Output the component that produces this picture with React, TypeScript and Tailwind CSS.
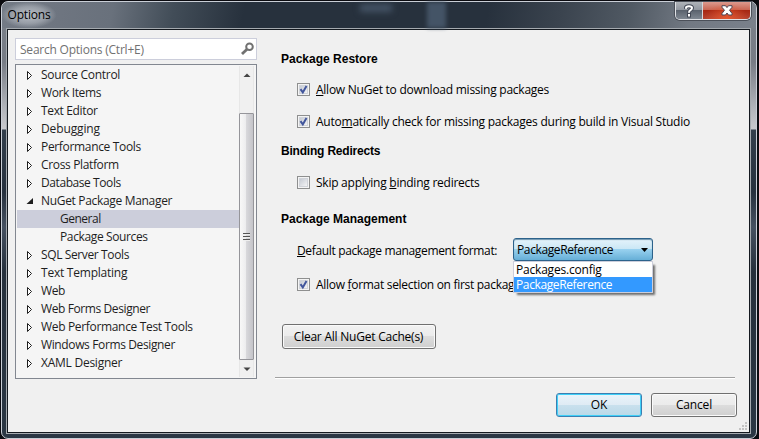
import type { ReactNode } from "react";

type Item = { label: string; tracking: string; open?: boolean; child?: boolean; selected?: boolean };

const items: Item[] = [
  { label: "Source Control", tracking: "tracking-[-0.3px]" },
  { label: "Work Items", tracking: "tracking-[-0.38px]" },
  { label: "Text Editor", tracking: "tracking-[-0.35px]" },
  { label: "Debugging", tracking: "tracking-[-0.12px]" },
  { label: "Performance Tools", tracking: "tracking-[-0.33px]" },
  { label: "Cross Platform", tracking: "tracking-[-0.35px]" },
  { label: "Database Tools", tracking: "tracking-[-0.42px]" },
  { label: "NuGet Package Manager", tracking: "tracking-[-0.32px]", open: true },
  { label: "General", tracking: "tracking-[-0.5px]", child: true, selected: true },
  { label: "Package Sources", tracking: "tracking-[-0.37px]", child: true },
  { label: "SQL Server Tools", tracking: "tracking-[-0.38px]" },
  { label: "Text Templating", tracking: "tracking-[-0.23px]" },
  { label: "Web", tracking: "tracking-[-0.4px]" },
  { label: "Web Forms Designer", tracking: "tracking-[-0.4px]" },
  { label: "Web Performance Test Tools", tracking: "tracking-[-0.33px]" },
  { label: "Windows Forms Designer", tracking: "tracking-[-0.37px]" },
  { label: "XAML Designer", tracking: "tracking-[-0.25px]" },
];

function TreeRow({ item }: { item: Item }) {
  return (
    <div
      className={`flex h-[18px] w-[222px] items-center whitespace-nowrap leading-[18px] ${item.selected ? "bg-[#cccedb]" : ""} ${item.child ? "pl-[43px]" : "pl-[9px]"}`}
    >
      {!item.child && (
        <svg width="15" height="18" viewBox="0 0 15 18" className="shrink-0">
          {item.open ? (
            <path d="M7 6v6H0.5z" fill="#1e1e1e" />
          ) : (
            <path d="M1.500 5.500v8l4-4z" fill="#fff" stroke="#1e1e1e" />
          )}
        </svg>
      )}
      <span className={item.tracking}>{item.label}</span>
    </div>
  );
}

function CheckRow({ checked, className, children }: { checked?: boolean; className: string; children: ReactNode }) {
  return (
    <div className={`ml-[22px] flex h-[13px] items-center whitespace-nowrap ${className}`}>
      <svg width="13" height="13" viewBox="0 0 13 13" className="mr-[6px] shrink-0">
        <defs>
          <linearGradient id="box" x1="0" y1="0" x2="1" y2="1">
            <stop offset="0" stopColor="#c3c8d1" />
            <stop offset="1" stopColor="#f6f6f7" />
          </linearGradient>
        </defs>
        <rect x="0.5" y="0.5" width="12" height="12" fill="#f4f4f4" stroke="#8e8f8f" />
        <rect x="2.5" y="2.5" width="8" height="8" fill="url(#box)" stroke="#d0d3d9" />
        {checked && <path d="M3.500 6.200l2.300 3.200L9.500 2.900" fill="none" stroke="#42569c" strokeWidth="2" />}
      </svg>
      {children}
    </div>
  );
}

function Key({ children }: { children: ReactNode }) {
  return <span className="underline decoration-1 underline-offset-[1px] [text-decoration-skip-ink:none]">{children}</span>;
}

function Heading({ className, children }: { className: string; children: ReactNode }) {
  return (
    <h2
      className={`ml-[6px] h-[14px] whitespace-nowrap font-['Liberation_Sans',Arial,sans-serif] text-[12px] font-bold leading-[14px] ${className}`}
    >
      {children}
    </h2>
  );
}

export default function App() {
  return (
    <div className="h-[439px] w-[759px] overflow-hidden bg-[#0b0b10] pl-px pt-px font-['Open_Sans','Noto_Sans',sans-serif] text-[12px] text-black">
      <div className="flex h-[438px] w-[756px] flex-col rounded-[7px] border border-[#c9ced6] bg-[linear-gradient(180deg,#7a808a_0px,#777c85_60px,#b0b3b9_105px,#c8c9cd_127px,#333f4c_128px,#27313e_190px,#465161_225px,#26303c_270px,#2b3744_100%)]">
        <header className="flex h-[26px] shrink-0 rounded-t-[6px] bg-[linear-gradient(100deg,#747b86_0px,#6e7580_60px,#69717c_110px,#424d58_170px,#27313d_240px,#27313d_480px,#3a434e_550px,#505963_620px,#727983_680px,#7a818b_100%)]">
          <div className="flex h-[26px] w-[54px] items-center justify-center bg-[radial-gradient(ellipse,rgba(210,214,220,0.75)_0%,rgba(190,195,202,0.5)_45%,transparent_72%)]">
            <span className="leading-4 tracking-[-0.2px]">Options</span>
          </div>
          <div className="ml-[304px] mt-[2px] h-2 w-8 shrink-0 bg-[#445365] blur-[3px]" />
          <div className="ml-[35px] h-full w-[19px] shrink-0 bg-[#48586b] opacity-90 blur-[2px]" />
          <div className="ml-auto mr-[5px] flex h-[18px] w-[76px] shrink-0 overflow-hidden rounded-b-[5px] border border-t-0 border-[#dfe1e5] shadow-[0_0_0_1px_#4b5059]">
            <div className="flex w-[27px] items-center justify-center border-r border-[#d5d7db] bg-[linear-gradient(180deg,#afb3b9_0%,#90969f_48%,#5b636e_50%,#7f8791_100%)]">
              <svg width="12" height="14" viewBox="0 0 12 14">
                <path d="M3 4.700V4q0-1.700 3-1.700t3 1.800q0 1.300-1.800 2.200Q6 6.900 6 8.700" fill="none" stroke="#424855" strokeWidth="4" />
                <rect x="4" y="9" width="4" height="4.500" fill="#424855" />
                <path d="M3 4.700V4q0-1.700 3-1.700t3 1.800q0 1.300-1.800 2.200Q6 6.900 6 8.700" fill="none" stroke="#fff" strokeWidth="2" />
                <rect x="5" y="10" width="2" height="2.500" fill="#fff" />
              </svg>
            </div>
            <div className="flex flex-1 items-center justify-center bg-[radial-gradient(ellipse_at_50%_100%,#e4572f_0%,transparent_65%),linear-gradient(180deg,#dc9a8e_0%,#c96552_47%,#a72712_50%,#b54432_100%)]">
              <svg width="12" height="11" viewBox="0 0 12 11">
                <path d="M1 .7h3.500L6 2.600 7.500.7H11v1.600L8.500 5.300 11 8.400V10H7.500L6 8 4.500 10H1V8.400l2.500-3.100L1 2.300z" fill="#fff" stroke="#4d4655" strokeLinejoin="round" />
              </svg>
            </div>
          </div>
        </header>

        <main className="ml-[4px] flex h-[406px] w-[745px] shrink-0 flex-col border border-[#a5aaaf]">
          <div className="flex h-[404px] w-[743px] border border-[#14191f] bg-[#f0f0f0]">
            <aside className="ml-[7px] mt-[8px] w-[242px] shrink-0 text-[#1e1e1e]">
              <div className="flex h-[22px] items-center justify-between border border-[#cccedb] bg-white pl-1 pr-[2px]">
                <span className="whitespace-nowrap pt-[2px] leading-4 tracking-[-0.22px] text-[#717171]">Search Options (Ctrl+E)</span>
                <svg width="13" height="14" viewBox="0 0 13 14">
                  <circle cx="8.500" cy="4.700" r="3.300" fill="none" stroke="#717171" strokeWidth="2" />
                  <path d="M6 7.200L1 12" stroke="#717171" strokeWidth="2.800" />
                </svg>
              </div>
              <div className="mt-1 flex h-[315px] border border-[#828790] bg-[#f5f5f5]">
                <div className="ml-px mt-px w-[222px] shrink-0">
                  {items.map((item) => (
                    <TreeRow key={item.label} item={item} />
                  ))}
                </div>
                <div className="mb-px mt-px flex w-[15px] flex-col border-x border-[#e7e7e7] bg-[#f0f0f0]">
                  <svg width="13" height="47" viewBox="0 0 13 47">
                    <path d="M3.500 11L7 7.500l3.500 3.500z" fill="#444" />
                  </svg>
                  <div className="-ml-px flex h-[247px] w-[15px] shrink-0 items-center justify-center rounded-[1px] border border-[#95959a] bg-[linear-gradient(90deg,#f8f8f8_0%,#eeeeef_42%,#d8d8db_50%,#c4c4c9_100%)]">
                    <svg width="7" height="8" viewBox="0 0 7 8">
                      <path d="M0 .5h7M0 3.500h7M0 6.500h7" stroke="#555" />
                      <path d="M0 1.500h7M0 4.500h7M0 7.500h7" stroke="#eee" />
                    </svg>
                  </div>
                  <svg width="13" height="17" viewBox="0 0 13 17">
                    <path d="M3.500 7.500L7 11l3.500-3.500z" fill="#444" />
                  </svg>
                </div>
              </div>
            </aside>

            <section className="ml-[18px] w-[474px] shrink-0">
              <Heading className="mt-[22px]">Package Restore</Heading>
              <CheckRow checked className="mt-[17px]">
                <span className="pt-px tracking-[-0.25px]"><Key>A</Key>llow NuGet to download missing packages</span>
              </CheckRow>
              <CheckRow checked className="mt-[19px]">
                <span className="pt-px tracking-[-0.23px]">Auto<Key>m</Key>atically check for missing packages during build in Visual Studio</span>
              </CheckRow>
              <Heading className="mt-[16px] tracking-[-0.2px]">Binding Redirects</Heading>
              <CheckRow className="mt-[18px]">
                <span className="pt-px tracking-[-0.25px]">Skip applying <Key>b</Key>inding redirects</span>
              </CheckRow>
              <Heading className="mt-[23px]">Package Management</Heading>
              <div className="relative ml-[22px] mt-[12px] flex h-[23px] items-center">
                <span className="w-[216px] shrink-0 whitespace-nowrap pt-[3px] tracking-[-0.35px]"><Key>D</Key>efault package management format:</span>
                <div className="flex h-[23px] w-[140px] items-center justify-between rounded-[3px] border border-[#2c628b] bg-[linear-gradient(180deg,#e5f3fb_0%,#cae7f5_48%,#98d1ef_50%,#66afd7_100%)] pl-[3px] pr-[4px] shadow-[inset_0_1px_1px_#6d94ad]">
                  <span className="tracking-[-0.38px]">PackageReference</span>
                  <svg width="7" height="4" viewBox="0 0 7 4"><path d="M0 0h7L3.500 4z" /></svg>
                </div>
                <div className="absolute left-[216px] top-[23px] z-10 h-[32px] w-[140px] border border-[#cccedb] bg-white leading-4 shadow-[3px_3px_2px_-1px_rgba(0,0,0,0.55)]">
                  <div className="h-[15px] pl-[2px] leading-[16px] tracking-[-0.2px]">Packages.config</div>
                  <div className="h-[15px] bg-[#3399ff] pl-[2px] tracking-[-0.38px] text-white">PackageReference</div>
                </div>
              </div>
              <CheckRow checked className="mt-[17px]">
                <span className="pt-px tracking-[-0.3px]">Allow <Key>f</Key>ormat selection on first packag</span>
              </CheckRow>
              <button className="ml-[7px] mt-[33px] flex h-[25px] w-[154px] items-center justify-center whitespace-nowrap rounded-[3px] border border-[#707070] bg-[linear-gradient(180deg,#f2f2f2_0%,#ebebeb_49%,#dddddd_50%,#cfcfcf_100%)] pr-px tracking-[-0.23px] shadow-[inset_0_0_0_1px_#fafafa]">
                Clear All NuGet Cache(s)
              </button>
              <div className="mt-[28px] h-[2px] w-[460px] border-b border-t border-b-white border-t-[#a0a0a0]" />
              <div className="ml-[281px] mt-[14px] flex gap-[9px]">
                <button className="h-[24px] w-[86px] rounded-[3px] border border-[#3c7fb1] bg-[linear-gradient(180deg,#eaf4fa_0%,#dfebf4_49%,#c9e0ed_50%,#b9d9e8_100%)] leading-[22px] tracking-[-0.2px] shadow-[inset_0_0_0_1px_#3fd0f8]">OK</button>
                <button className="h-[24px] w-[86px] rounded-[3px] border border-[#707070] bg-[linear-gradient(180deg,#f2f2f2_0%,#ebebeb_49%,#dddddd_50%,#cfcfcf_100%)] leading-[22px] tracking-[-0.15px] shadow-[inset_0_0_0_1px_#fafafa]">Cancel</button>
              </div>
              <svg width="10" height="10" viewBox="0 0 10 10" className="ml-[463px] mt-[4px]">
                <path d="M7 1h2v2H7zM7 4h2v2H7zM4 4h2v2H4zM7 7h2v2H7zM4 7h2v2H4zM1 7h2v2H1z" fill="#c3c3c3" />
              </svg>
            </section>
          </div>
        </main>
      </div>
    </div>
  );
}
